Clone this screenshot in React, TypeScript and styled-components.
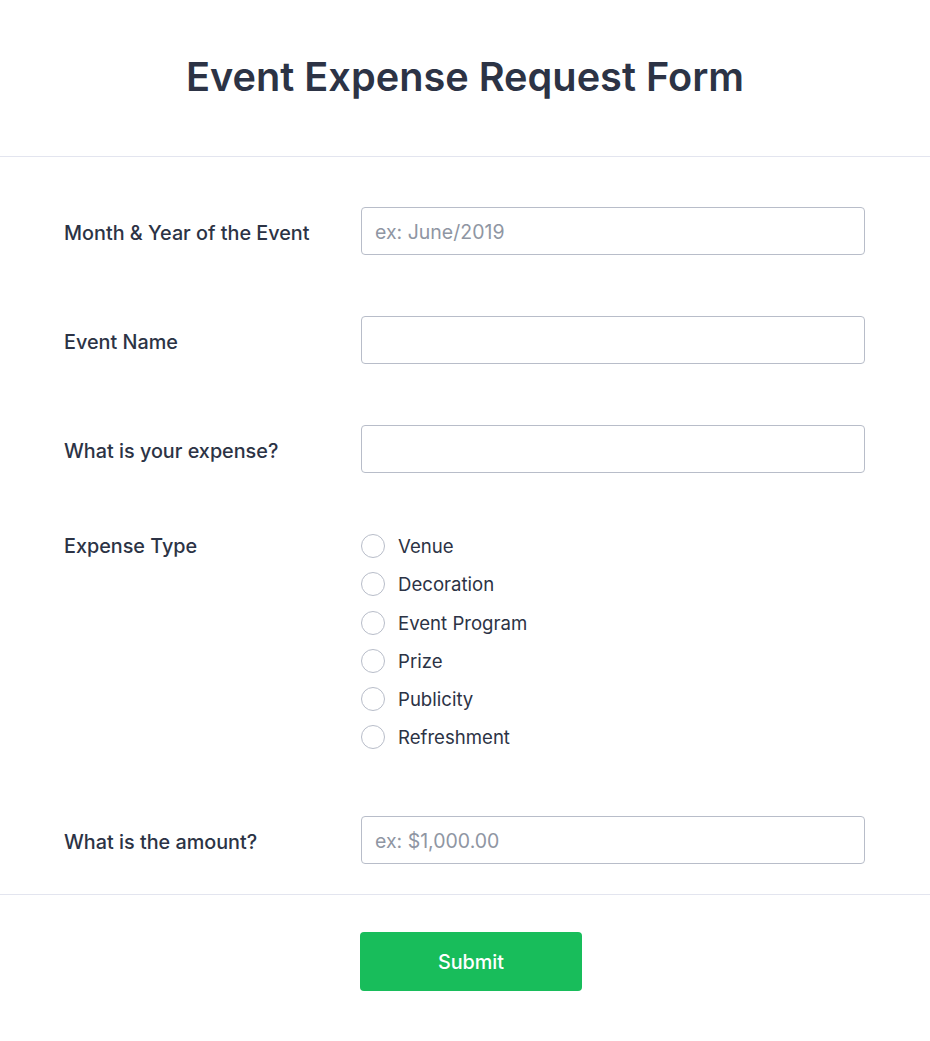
import React from 'react';
import styled, { createGlobalStyle } from 'styled-components';

const GlobalStyle = createGlobalStyle`
  body {
    margin: 0;
    background: #ffffff;
    font-family: Inter, "Noto Sans", sans-serif;
    color: #2c3345;
  }
  * { box-sizing: border-box; }
`;

const Page = styled.div`
  width: 930px;
  background: #ffffff;
`;

const Header = styled.header`
  height: 157px;
  display: flex;
  align-items: center;
  justify-content: center;
  border-bottom: 1px solid #e3e5ef;
  padding-bottom: 2px;
`;

const Title = styled.h1`
  margin: 0;
  font-size: 39.7px;
  font-weight: 600;
  color: #2c3345;
`;

const Body = styled.form`
  padding: 50px 65px 30px 64px;
  display: flex;
  flex-direction: column;
  gap: 61px;
`;

const Row = styled.div<{ $top?: boolean }>`
  display: grid;
  grid-template-columns: 297px 1fr;
  align-items: ${({ $top }) => ($top ? 'start' : 'center')};
`;

const Label = styled.label<{ $top?: boolean }>`
  font-size: 19.8px;
  font-weight: 500;
  color: #2c3345;
  line-height: 24px;
  padding-top: ${({ $top }) => ($top ? '0' : '3px')};
`;

const Input = styled.input`
  width: 100%;
  height: 48px;
  border: 1px solid #b8bdc9;
  border-radius: 4px;
  padding: 2px 13px 0;
  font-family: inherit;
  font-size: 19.5px;
  color: #2c3345;
  outline: none;

  &::placeholder {
    color: #8f96a3;
  }
`;

const RadioList = styled.div`
  display: flex;
  flex-direction: column;
  gap: 14.3px;
  padding-bottom: 6px;
`;

const RadioItem = styled.label`
  display: flex;
  align-items: center;
  gap: 13px;
  font-size: 18.6px;
  line-height: 24px;
  color: #2c3345;
  cursor: pointer;
`;

const Circle = styled.span`
  width: 24px;
  height: 24px;
  border-radius: 50%;
  border: 1px solid #b8bdc9;
  background: #ffffff;
  flex-shrink: 0;
`;

const Footer = styled.div`
  border-top: 1px solid #e3e5ef;
  display: flex;
  justify-content: center;
  padding: 37px 0 50px;
`;

const SubmitButton = styled.button`
  width: 222px;
  height: 59px;
  margin-left: 12px;
  padding-top: 2px;
  background: #18bd5b;
  border: none;
  border-radius: 4px;
  color: #ffffff;
  font-family: inherit;
  font-size: 19.8px;
  font-weight: 500;
  cursor: pointer;
`;

const expenseTypes = ['Venue', 'Decoration', 'Event Program', 'Prize', 'Publicity', 'Refreshment'];

const App = () => {
  return (
    <Page>
      <GlobalStyle />
      <Header>
        <Title>Event Expense Request Form</Title>
      </Header>
      <Body onSubmit={(e) => e.preventDefault()}>
        <Row>
          <Label>Month &amp; Year of the Event</Label>
          <Input placeholder="ex: June/2019" />
        </Row>
        <Row>
          <Label>Event Name</Label>
          <Input />
        </Row>
        <Row>
          <Label>What is your expense?</Label>
          <Input />
        </Row>
        <Row $top>
          <Label $top>Expense Type</Label>
          <RadioList>
            {expenseTypes.map((t) => (
              <RadioItem key={t}>
                <Circle />
                {t}
              </RadioItem>
            ))}
          </RadioList>
        </Row>
        <Row>
          <Label>What is the amount?</Label>
          <Input placeholder="ex: $1,000.00" />
        </Row>
      </Body>
      <Footer>
        <SubmitButton type="submit">Submit</SubmitButton>
      </Footer>
    </Page>
  );
};

export default App;
